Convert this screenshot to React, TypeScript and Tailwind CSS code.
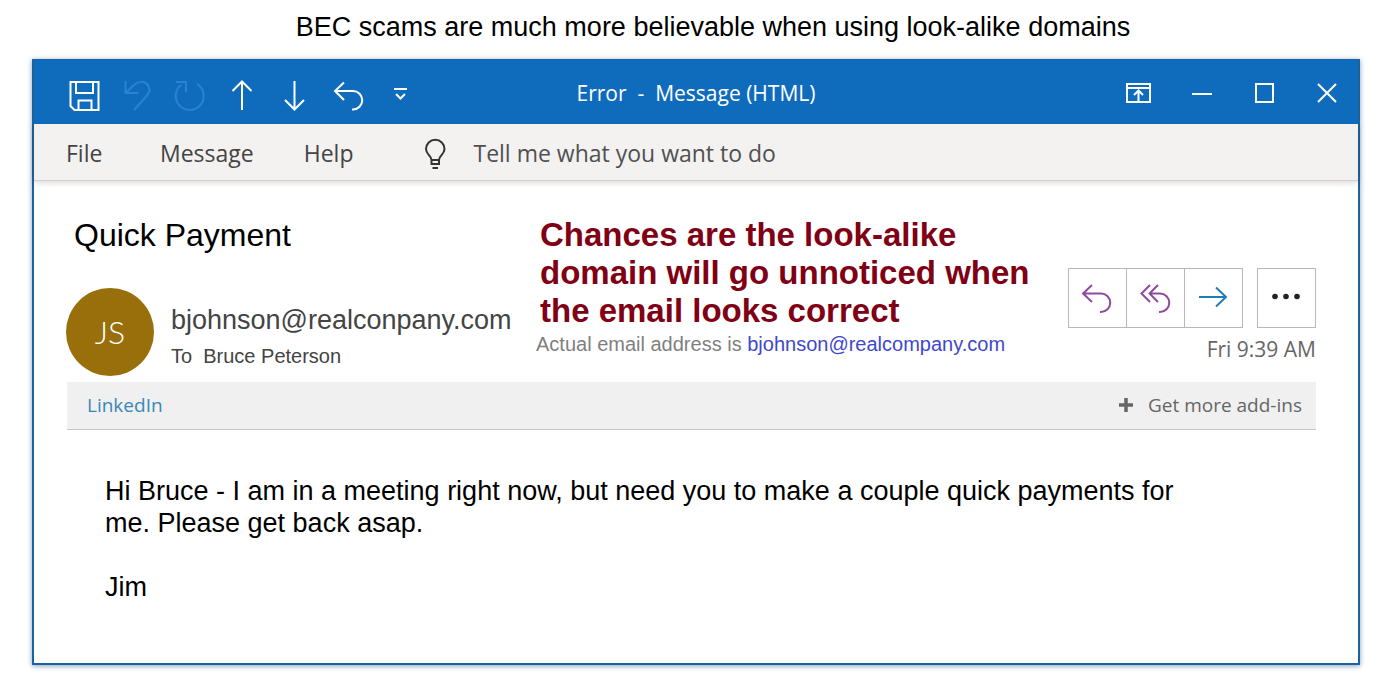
import type { ReactNode } from "react";

const TOOLBAR = [
  {
    label: "Save",
    color: "text-white",
    icon: (
      <>
        <path d="M13.5 22H41.5V50H17.5L13.5 46Z" />
        <path d="M19 22V33H36V22M21.5 50V40.5H34.5V50" />
      </>
    ),
  },
  {
    label: "Undo",
    color: "text-[#2b82d2]",
    icon: (
      <path d="M15.5 21V33H28.5M15.5 33L24 25C28 21 34 21 37 24C40.5 28 40 32 37 35.5L24 50" />
    ),
  },
  {
    label: "Redo",
    color: "text-[#2b82d2]",
    icon: <path d="M13 22H23V32M18 25A14 14 0 1 0 34 24" />,
  },
  {
    label: "Previous item",
    color: "text-white",
    icon: <path d="M26 50V22M16.5 31L26 21.5L35.5 31" />,
  },
  {
    label: "Next item",
    color: "text-white",
    icon: <path d="M25.5 21V49M16 40L25.5 49.5L35 40" />,
  },
  {
    label: "Reply",
    color: "text-white",
    icon: <path d="M22 22.5L13 31L22 40M13 31H31A9.25 9.25 0 0 1 31 49.5H30" />,
  },
  {
    label: "Customize toolbar",
    color: "text-white",
    icon: <path d="M19 29H32M21 34L25.5 38.5L30 34" />,
  },
];

const WINDOW_CONTROLS = [
  {
    label: "Ribbon display options",
    icon: (
      <path d="M21 24H44V42H21ZM21 28H44M32.5 41V31M28 35L32.5 30.5L37 35" />
    ),
  },
  { label: "Minimize", icon: <path d="M23 34H43" /> },
  { label: "Maximize", icon: <path d="M24 24H41V42H24Z" /> },
  { label: "Close", icon: <path d="M23 24L41 42M41 24L23 42" /> },
];

const ACTIONS = [
  {
    label: "Reply",
    color: "text-[#8f4a9f]",
    icon: <path d="M23 16L14 24.5L23 33M14 24.5H32A9.25 9.25 0 0 1 32 43H31" />,
  },
  {
    label: "Reply all",
    color: "text-[#8f4a9f]",
    icon: (
      <path d="M23 16L14.5 24.5L23 33M31 16L22.5 24.5L31 33M22.5 24.5H33A9.25 9.25 0 0 1 33 43H32" />
    ),
  },
  {
    label: "Forward",
    color: "text-[#1f7db5]",
    icon: <path d="M14 28H41M31 18.5L41 28L31 37.5" />,
  },
];

type IconProps = {
  className: string;
  viewBox: string;
  children: ReactNode;
};

const Icon = ({ className, viewBox, children }: IconProps) => (
  <svg
    className={className}
    viewBox={viewBox}
    fill="none"
    stroke="currentColor"
    strokeWidth="2"
    aria-hidden="true"
  >
    {children}
  </svg>
);

const TitleBar = () => (
  <header className="grid grid-cols-[1fr_auto_1fr] items-center bg-[#0f6cbd] text-white">
    <div className="flex pl-[23px]">
      {TOOLBAR.map(({ label, color, icon }) => (
        <button key={label} type="button" aria-label={label} className={color}>
          <Icon className="h-16 w-[53px]" viewBox="0 0 53 64">
            {icon}
          </Icon>
        </button>
      ))}
    </div>
    <h2 className="whitespace-pre pt-0.5 text-[21px] leading-8">
      {"Error  -  Message (HTML)"}
    </h2>
    <div className="flex justify-end">
      {WINDOW_CONTROLS.map(({ label, icon }) => (
        <button key={label} type="button" aria-label={label}>
          <Icon className="h-16 w-[63px]" viewBox="0 0 63 64">
            {icon}
          </Icon>
        </button>
      ))}
    </div>
  </header>
);

const MenuBar = () => (
  <nav className="relative flex h-[57px] items-center border-b border-[#cfcecd] bg-[#f3f2f1] pt-0.5 pl-8 text-[23px] leading-8 text-[#444] shadow-[0_2px_6px_rgba(0,0,0,0.15)]">
    <div className="flex gap-[50px]">
      <button type="button" className="min-w-11 text-left">
        File
      </button>
      <button type="button">Message</button>
      <button type="button">Help</button>
    </div>
    <label className="ml-[70px] flex flex-1 items-center gap-[26px]">
      <Icon className="h-8 w-6 text-[#333]" viewBox="0 0 24 32">
        <path d="M8.5 23C8.5 18.5 3 17.5 3 12A9.25 9.25 0 0 1 21.5 12C21.5 17.5 16 18.5 16 23V27H8.5ZM8.5 23H16M9.5 31H15" />
      </Icon>
      <input
        type="text"
        aria-label="Tell me what you want to do"
        placeholder="Tell me what you want to do"
        className="flex-1 bg-transparent outline-none placeholder:text-[#505050]"
      />
    </label>
  </nav>
);

const MessageHeader = () => (
  <section className="flex pt-[35px] pl-8 font-['Liberation_Sans',Arial,sans-serif]">
    <div className="w-[470px] shrink-0">
      <h3 className="pl-2 text-[32px] leading-[38px] text-black">
        Quick Payment
      </h3>
      <div className="mt-[34px] flex items-center gap-[17px]">
        <div className="flex size-[88px] items-center justify-center rounded-full bg-[#986f0b] font-['Lato',sans-serif] text-[32px] font-light text-white">
          JS
        </div>
        <div className="pt-2 text-[#444]">
          <p className="text-[27px] leading-10">bjohnson@realconpany.com</p>
          <p className="whitespace-pre text-[20px] leading-8">
            {"To  Bruce Peterson"}
          </p>
        </div>
      </div>
    </div>

    <div>
      <p className="max-w-[500px] pl-1 text-[33px] leading-[38px] font-bold text-[#800014]">
        Chances are the look-alike domain will go unnoticed when the email looks
        correct
      </p>
      <p className="text-[20px] leading-7 text-[#7f7f7f]">
        Actual email address is{" "}
        <a href="mailto:bjohnson@realcompany.com" className="text-[#3f48cc]">
          bjohnson@realcompany.com
        </a>
      </p>
    </div>

    <div className="ml-auto shrink-0 pt-[52px] text-right">
      <div className="flex gap-[14px]">
        <div className="flex divide-x divide-[#b8b8b8] border border-[#b8b8b8]">
          {ACTIONS.map(({ label, color, icon }) => (
            <button
              key={label}
              type="button"
              aria-label={label}
              className={color}
            >
              <Icon className="h-[58px] w-[57px]" viewBox="0 0 57 58">
                {icon}
              </Icon>
            </button>
          ))}
        </div>
        <button
          type="button"
          aria-label="More actions"
          className="border border-[#b8b8b8] text-[#222]"
        >
          <svg
            className="h-[58px] w-[57px]"
            viewBox="0 0 57 58"
            fill="currentColor"
            aria-hidden="true"
          >
            <circle cx="17" cy="27.5" r="2.8" />
            <circle cx="28" cy="27.5" r="2.8" />
            <circle cx="39" cy="27.5" r="2.8" />
          </svg>
        </button>
      </div>
      <time className="mt-[5px] block font-['Open_Sans',sans-serif] text-[21px] leading-8 text-[#666]">
        Fri 9:39 AM
      </time>
    </div>
  </section>
);

const AddInsBar = () => (
  <div className="mt-[6px] ml-[33px] flex h-12 items-center justify-between border-b border-[#c8c8c8] bg-[#f0f0f0] pr-[14px] pb-0.5 pl-5 text-[19px] leading-7">
    <a href="#linkedin" className="text-[#3a87b7]">
      LinkedIn
    </a>
    <button type="button" className="flex items-center gap-[14px] text-[#666]">
      <svg
        className="size-4"
        viewBox="0 0 16 16"
        stroke="currentColor"
        strokeWidth="3.5"
        aria-hidden="true"
      >
        <path d="M8 1V15M1 8H15" />
      </svg>
      Get more add-ins
    </button>
  </div>
);

export default function App() {
  return (
    <div className="min-h-screen bg-white pr-[39px] pb-3 pl-8 font-['Open_Sans',sans-serif]">
      <h1 className="pt-[9px] pb-[14px] pl-[34px] text-center font-['Liberation_Sans',Arial,sans-serif] text-[27px] leading-9 text-black">
        BEC scams are much more believable when using look-alike domains
      </h1>

      <main className="border-2 border-t border-[#1a639f] bg-white shadow-[0_1px_5px_rgba(30,80,130,0.55)]">
        <TitleBar />
        <MenuBar />
        <div className="pr-[42px]">
          <MessageHeader />
          <AddInsBar />
          <article className="mt-[45px] mb-[60px] max-w-[1170px] pl-[71px] font-['Liberation_Sans',Arial,sans-serif] text-[27px] leading-8 text-black">
            <p>
              Hi Bruce - I am in a meeting right now, but need you to make a
              couple quick payments for me. Please get back asap.
            </p>
            <p className="mt-8">Jim</p>
          </article>
        </div>
      </main>
    </div>
  );
}
